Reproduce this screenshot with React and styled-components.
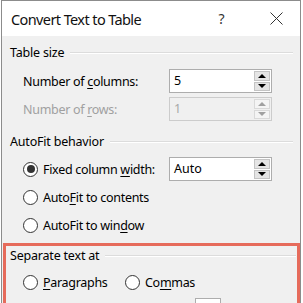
import React from 'react'
import styled, { createGlobalStyle } from 'styled-components'

const GlobalStyle = createGlobalStyle`
    html, body {
        margin: 0;
        padding: 0;
        background: #fff;
        overflow: hidden;
    }
    body {
        font-family: 'Noto Sans', 'Open Sans', sans-serif;
        color: #000;
    }
`

const Dialog = styled.div`
    margin-left: 1px;
    width: 298px;
    height: 340px;
    border: 1px solid #8c8c8c;
    border-bottom: none;
    background: #f0f0f0;
    display: flex;
    flex-direction: column;
`

const TitleBar = styled.div`
    height: 35px;
    background: #fff;
    display: flex;
    align-items: center;
    padding-left: 9px;
    padding-right: 1px;
`

const Title = styled.div`
    flex: 1;
    font-size: 14.5px;
    letter-spacing: -0.6px;
    color: #111;
`

const TitleButton = styled.div`
    width: ${(p) => p.$width || 46}px;
    height: 35px;
    display: flex;
    align-items: center;
    justify-content: center;
    font-size: 14px;
    color: #333;
`

const Body = styled.div`
    padding-top: 7px;
    display: flex;
    flex-direction: column;
`

const Group = styled.div`
    margin-top: ${(p) => p.$gap || 0}px;
    margin-left: 1px;
    border: 3px solid ${(p) => (p.$highlight ? '#e66b5b' : 'transparent')};
    border-left-width: ${(p) => (p.$highlight ? 3 : 0)}px;
    border-top-width: ${(p) => (p.$highlight ? 3 : 0)}px;
    padding-left: ${(p) => (p.$highlight ? 4 : 7)}px;
    padding-right: ${(p) => (p.$highlight ? 1 : 4)}px;
`

const GroupHeader = styled.div`
    height: 20px;
    display: flex;
    align-items: center;
    gap: 6px;
    font-size: 12.5px;
    letter-spacing: -0.2px;
    line-height: 20px;

    &::after {
        content: '';
        flex: 1;
        height: 1px;
        background: #dcdcdc;
        border-bottom: 1px solid #fff;
    }
`

const Rows = styled.div`
    margin-top: ${(p) => (p.$top === undefined ? 4 : p.$top)}px;
    padding-left: 13px;
    display: flex;
    flex-direction: column;
`

const Row = styled.div`
    height: 28px;
    display: flex;
    align-items: center;
`

const Label = styled.div`
    width: 146px;
    font-size: 12.5px;
    letter-spacing: -0.3px;
    color: ${(p) => (p.$disabled ? '#a0a0a0' : '#000')};
    white-space: nowrap;
`

const Key = styled.span`
    text-decoration: underline;
    text-underline-offset: 2px;
`

const Spin = styled.div`
    width: 101px;
    height: 22px;
    border: 1px solid ${(p) => (p.$disabled ? '#cccccc' : '#adadad')};
    background: ${(p) => (p.$disabled ? '#f0f0f0' : '#fff')};
    display: flex;
`

const SpinValue = styled.div`
    flex: 1;
    padding-left: 4px;
    font-size: 12.5px;
    line-height: 22px;
    color: ${(p) => (p.$disabled ? '#a8a8a8' : '#000')};
`

const SpinButtons = styled.div`
    width: 16px;
    display: flex;
    flex-direction: column;
    gap: 1px;
    padding: 1px 1px 1px 0;
`

const SpinButton = styled.div`
    flex: 1;
    background: ${(p) => (p.$disabled ? '#f4f4f4' : '#e5e5e5')};
    border: 1px solid ${(p) => (p.$disabled ? '#d9d9d9' : '#c4c4c4')};
    display: flex;
    align-items: center;
    justify-content: center;

    &::before {
        content: '';
        border-left: 4px solid transparent;
        border-right: 4px solid transparent;
        ${(p) => (p.$down ? 'border-top' : 'border-bottom')}: 4px solid
            ${(p) => (p.$disabled ? '#a0a0a0' : '#000')};
    }
`

const Radio = styled.span`
    width: 15px;
    height: 15px;
    box-sizing: border-box;
    border: 1px solid #333;
    border-radius: 50%;
    background: #fff;
    display: inline-flex;
    align-items: center;
    justify-content: center;
    margin-right: 5px;
    flex-shrink: 0;

    &::after {
        content: '';
        width: 8px;
        height: 8px;
        border-radius: 50%;
        background: ${(p) => (p.$checked ? '#333' : 'transparent')};
    }
`

const Option = styled.div`
    display: flex;
    align-items: center;
    font-size: 12.5px;
    letter-spacing: -0.3px;
    width: ${(p) => p.$width || 'auto'};
    white-space: nowrap;
`

const SmallBox = styled.div`
    width: 24px;
    height: 22px;
    margin-left: 14px;
    border: 1px solid #adadad;
    background: #fff;
`

function Spinner({ value, disabled }) {
    return (
        <Spin $disabled={disabled}>
            <SpinValue $disabled={disabled}>{value}</SpinValue>
            <SpinButtons>
                <SpinButton $disabled={disabled} />
                <SpinButton $disabled={disabled} $down />
            </SpinButtons>
        </Spin>
    )
}

export default function App() {
    return (
        <>
            <GlobalStyle />
            <Dialog>
                <TitleBar>
                    <Title>Convert Text to Table</Title>
                    <TitleButton $width={63}>?</TitleButton>
                    <TitleButton>
                        <svg width="13" height="13" viewBox="0 0 13 13">
                            <path d="M0.5 0.5 L12.5 12.5 M12.5 0.5 L0.5 12.5" stroke="#333" strokeWidth="1" />
                        </svg>
                    </TitleButton>
                </TitleBar>
                <Body>
                    <Group>
                        <GroupHeader>Table size</GroupHeader>
                        <Rows>
                            <Row>
                                <Label>
                                    Number of <Key>c</Key>olumns:
                                </Label>
                                <Spinner value="5" />
                            </Row>
                            <Row>
                                <Label $disabled>
                                    Number of <Key>r</Key>ows:
                                </Label>
                                <Spinner value="1" disabled />
                            </Row>
                        </Rows>
                    </Group>
                    <Group $gap={6}>
                        <GroupHeader>AutoFit behavior</GroupHeader>
                        <Rows $top={3}>
                            <Row>
                                <Option $width="146px">
                                    <Radio $checked />
                                    <span>
                                        Fixed column <Key>w</Key>idth:
                                    </span>
                                </Option>
                                <Spinner value="Auto" />
                            </Row>
                            <Row>
                                <Option>
                                    <Radio />
                                    <span>
                                        Auto<Key>F</Key>it to contents
                                    </span>
                                </Option>
                            </Row>
                            <Row>
                                <Option>
                                    <Radio />
                                    <span>
                                        AutoFit to win<Key>d</Key>ow
                                    </span>
                                </Option>
                            </Row>
                        </Rows>
                    </Group>
                    <Group $gap={1} $highlight>
                        <GroupHeader>Separate text at</GroupHeader>
                        <Rows $top={2}>
                            <Row>
                                <Option $width="102px">
                                    <Radio />
                                    <span>
                                        <Key>P</Key>aragraphs
                                    </span>
                                </Option>
                                <Option>
                                    <Radio />
                                    <span>
                                        Co<Key>m</Key>mas
                                    </span>
                                </Option>
                            </Row>
                            <Row>
                                <Option $width="102px">
                                    <Radio />
                                    <span>
                                        <Key>T</Key>abs
                                    </span>
                                </Option>
                                <Option>
                                    <Radio />
                                    <span>
                                        <Key>O</Key>ther:
                                    </span>
                                    <SmallBox />
                                </Option>
                            </Row>
                        </Rows>
                    </Group>
                </Body>
            </Dialog>
        </>
    )
}
